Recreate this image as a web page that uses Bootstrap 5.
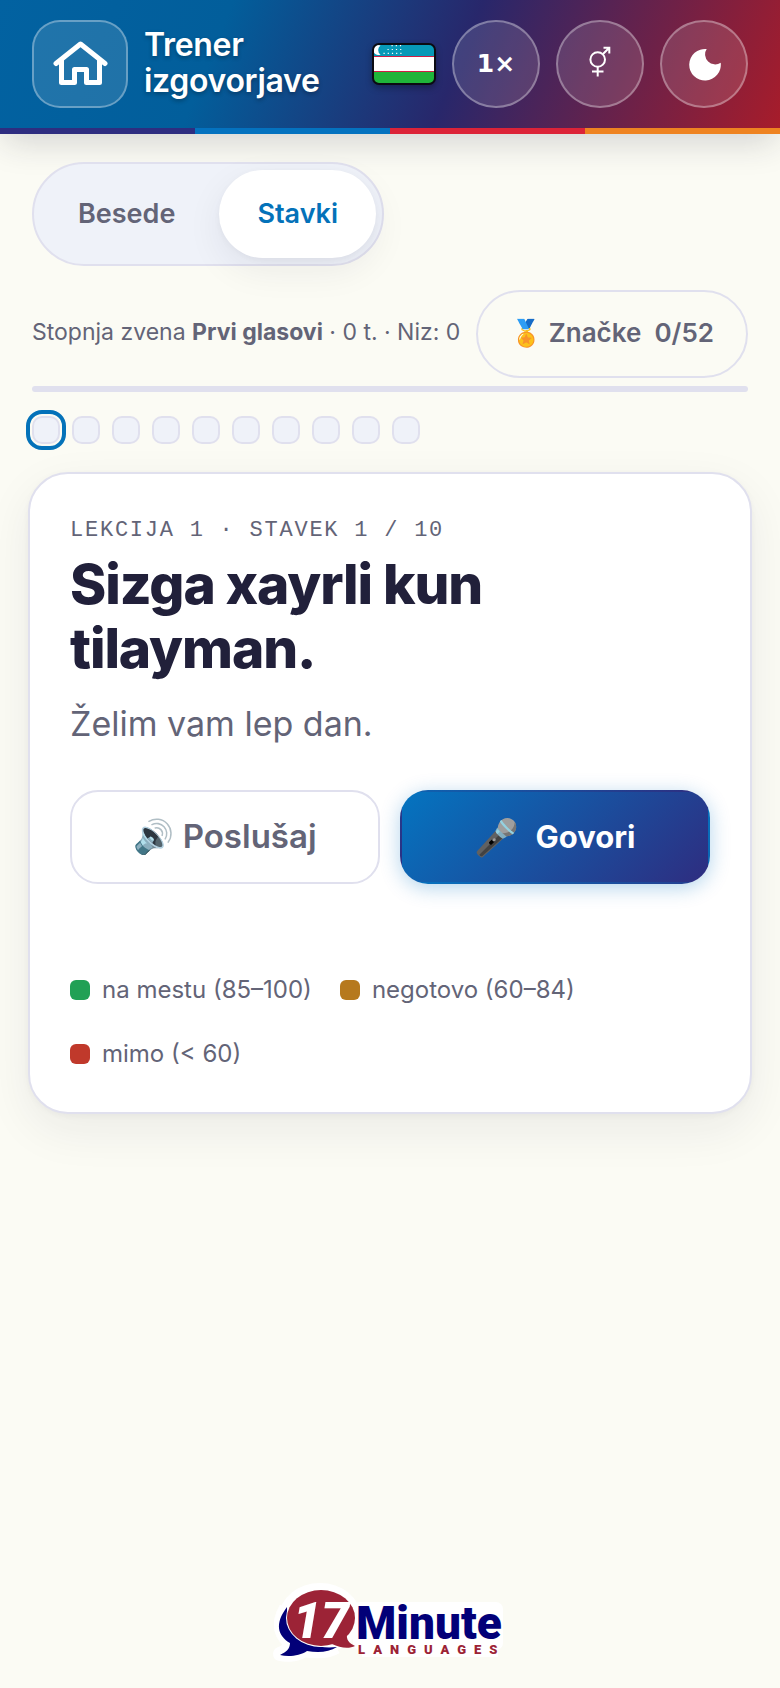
<!DOCTYPE html>
<html lang="sl">
<head>
<meta charset="utf-8">
<meta name="viewport" content="width=device-width, initial-scale=1">
<title>Trener izgovorjave</title>
<link rel="stylesheet" href="https://cdn.jsdelivr.net/npm/bootstrap@5.3.0/dist/css/bootstrap.min.css">
<style>
  :root {
    --ink: #21203a;
    --muted: #636477;
    --line: #e0e0ee;
    --soft: #eff2f9;
    --blue: #0472b9;
    --indigo: #2e2d80;
    --page: #fbfbf4;
  }
  body {
    font-family: Inter, "Noto Sans", sans-serif;
    background: var(--page);
    color: var(--muted);
  }
  .topbar {
    background: linear-gradient(112deg, #0262a1 0%, #025e9b 28%, #28276b 58%, #a81c2a 100%);
    box-shadow: 0 12px 32px -4px rgba(33, 32, 58, .18);
  }
  .topbar-row { padding: 20px 32px; }
  .stripe { height: 6px; }
  .stripe span { flex: 1; }
  .c-indigo { background: var(--indigo); }
  .c-blue { background: #0472bf; }
  .c-red { background: #dc2338; }
  .c-orange { background: #ee8321; }
  .home-btn, .round-btn {
    height: 88px;
    color: #fff;
    background: rgba(255, 255, 255, .12);
    border: 2px solid rgba(255, 255, 255, .32);
  }
  .home-btn { width: 96px; border-radius: 28px; }
  .round-btn { width: 88px; border-radius: 50%; }
  .speed { font: 700 25px/36px "DejaVu Sans", sans-serif; }
  .app-title {
    padding-bottom: 2px;
    font-size: 32px;
    line-height: 36px;
    font-weight: 600;
    letter-spacing: -.01em;
    color: #fff;
    text-shadow: 0 2px 4px rgba(0, 0, 0, .3);
  }
  .flag { filter: drop-shadow(0 3px 3px rgba(0, 0, 0, .3)); }
  .page-main { padding: 28px 32px; }
  .mode-switch {
    padding: 6px;
    gap: 6px;
    background: var(--soft);
    border: 2px solid var(--line);
  }
  .mode-switch button {
    height: 88px;
    padding: 0 38px;
    border: 0;
    font-size: 27px;
    font-weight: 600;
    color: var(--muted);
    background: transparent;
  }
  .mode-switch button.active {
    color: var(--blue);
    background: #fff;
    box-shadow: 0 12px 36px rgba(33, 32, 58, .07), 0 2px 6px rgba(33, 32, 58, .04);
  }
  .stats { margin-top: 24px; font-size: 23px; }
  .stats-text { padding-bottom: 4px; }
  .badges-btn {
    height: 88px;
    padding: 0 32px 4px;
    border: 2px solid var(--line);
    font-size: 26px;
    font-weight: 600;
    color: var(--muted);
    background: transparent;
  }
  .meter { height: 6px; margin-top: 8px; background: var(--line); }
  .steps { gap: 12px; margin-top: 24px; }
  .steps button {
    width: 28px;
    height: 28px;
    padding: 0;
    border: 2px solid var(--line);
    border-radius: 10px;
    background: var(--soft);
  }
  .steps button.current { outline: 4px solid var(--blue); outline-offset: 2px; }
  .lesson {
    margin: 28px -4px 0;
    padding: 40px;
    background: #fff;
    border: 2px solid var(--line);
    border-radius: 40px;
    box-shadow: 0 16px 48px rgba(33, 32, 58, .07), 0 2px 6px rgba(33, 32, 58, .04);
  }
  .lesson-meta {
    font: 22px/34px "Liberation Mono", monospace;
    letter-spacing: .08em;
    margin-bottom: 4px;
  }
  .phrase {
    font-size: 55px;
    line-height: 64px;
    font-weight: 800;
    letter-spacing: -.02em;
    color: var(--ink);
  }
  .translation { font-size: 34px; line-height: 48px; margin-top: 20px; }
  .actions { gap: 20px; margin-top: 42px; }
  .actions button {
    flex: 1;
    height: 94px;
    border: 2px solid var(--line);
    border-radius: 28px;
    background: #fff;
    color: var(--muted);
    font-size: 33px;
    font-weight: 600;
  }
  .actions button.speak {
    border-color: transparent;
    background: linear-gradient(135deg, #0474c0, #2e2d80);
    color: #fff;
    font-size: 31px;
    font-weight: 700;
    box-shadow: 0 4px 20px rgba(4, 114, 191, .3);
  }
  .actions .emoji { font-size: 36px; }
  .legend-list { gap: 28px; margin-top: 88px; font-size: 24px; line-height: 36px; }
  .swatch { width: 20px; height: 20px; border-radius: 6px; }
  .c-good { background: #21a055; }
  .c-unsure { background: #b6791d; }
  .c-off { background: #c0392b; }
  .site-logo { padding-bottom: 20px; }
</style>
<script src="https://cdn.jsdelivr.net/npm/bootstrap@5.3.0/dist/js/bootstrap.bundle.min.js"></script>
</head>
<body class="d-flex flex-column min-vh-100">

<header class="topbar">
  <div class="topbar-row d-flex align-items-center gap-3">
    <button type="button" class="home-btn d-flex align-items-center justify-content-center flex-shrink-0" aria-label="Domov">
      <svg width="56" height="48" viewBox="0 0 56 48" fill="none" stroke="#fff" stroke-width="5" stroke-linecap="round" stroke-linejoin="round">
        <path d="M4 23.500 28.500 4l24.500 19.500M9.500 21v21.500h13V29.500h12v13h13V21"/>
      </svg>
    </button>
    <h1 class="app-title flex-grow-1 mb-0">Trener izgovorjave</h1>
    <svg class="flag flex-shrink-0" width="64" height="42" viewBox="0 0 64 42" role="img" aria-label="Uzbekistan">
      <defs><clipPath id="flagShape"><rect x="1" y="1" width="62" height="40" rx="6"/></clipPath></defs>
      <g clip-path="url(#flagShape)">
        <rect width="64" height="42" fill="#fff"/>
        <rect width="64" height="13" fill="#0799b8"/>
        <rect y="13" width="64" height="1" fill="#ce1f45"/>
        <rect y="28" width="64" height="1" fill="#ce1f45"/>
        <rect y="29" width="64" height="13" fill="#1fb53a"/>
        <path d="M8.500 2.500a5 5 0 1 0 0 9 5.500 5.500 0 0 1 0-9z" fill="#fff"/>
        <path d="M11.500 10.300h19M15.500 6.500h15M19.500 2.700h11" stroke="#fff" stroke-width="1.200" stroke-dasharray="1.200 3"/>
      </g>
      <rect x="1" y="1" width="62" height="40" rx="6" fill="none" stroke="#0b0b12" stroke-width="2"/>
    </svg>
    <button type="button" class="round-btn speed flex-shrink-0">1×</button>
    <button type="button" class="round-btn d-flex align-items-center justify-content-center flex-shrink-0" aria-label="Glas">
      <svg width="24" height="36" viewBox="0 0 24 36" fill="none" stroke="#fff" stroke-width="2">
        <circle cx="9.700" cy="13.500" r="7.300"/>
        <path d="M15 8 21 2M15.500 1.700H21.300V7.500M9.700 21v9.500M4 25.500h11.500"/>
      </svg>
    </button>
    <button type="button" class="round-btn d-flex align-items-center justify-content-center flex-shrink-0" aria-label="Temni način">
      <svg width="36" height="36" viewBox="0 0 36 36"><path d="M20.700 3A10 10 0 0 0 34.700 16.700 15.800 15.800 0 1 1 20.700 3z" fill="#fff"/></svg>
    </button>
  </div>
  <div class="stripe d-flex"><span class="c-indigo"></span><span class="c-blue"></span><span class="c-red"></span><span class="c-orange"></span></div>
</header>

<main class="page-main flex-grow-1">
  <div class="mode-switch d-inline-flex rounded-pill align-top">
    <button type="button" class="rounded-pill">Besede</button>
    <button type="button" class="rounded-pill active" aria-pressed="true">Stavki</button>
  </div>

  <div class="stats d-flex align-items-center justify-content-between">
    <div class="stats-text">Stopnja zvena <b>Prvi glasovi</b> · 0 t. · Niz: 0</div>
    <button type="button" class="badges-btn rounded-pill text-nowrap">🏅 Značke&nbsp; 0/52</button>
  </div>

  <div class="meter rounded-pill" role="progressbar" aria-label="Napredek" aria-valuenow="0" aria-valuemin="0" aria-valuemax="100"></div>

  <div class="steps d-flex flex-wrap">
    <button type="button" class="current" aria-label="Stavek 1"></button>
    <button type="button" aria-label="Stavek 2"></button>
    <button type="button" aria-label="Stavek 3"></button>
    <button type="button" aria-label="Stavek 4"></button>
    <button type="button" aria-label="Stavek 5"></button>
    <button type="button" aria-label="Stavek 6"></button>
    <button type="button" aria-label="Stavek 7"></button>
    <button type="button" aria-label="Stavek 8"></button>
    <button type="button" aria-label="Stavek 9"></button>
    <button type="button" aria-label="Stavek 10"></button>
  </div>

  <section class="lesson">
    <div class="lesson-meta text-uppercase">Lekcija 1 · Stavek 1 / 10</div>
    <h2 class="phrase mb-0">Sizga xayrli kun tilayman.</h2>
    <p class="translation mb-0">Želim vam lep dan.</p>
    <div class="actions d-flex">
      <button type="button">🔊 Poslušaj</button>
      <button type="button" class="speak d-flex align-items-center justify-content-center gap-3"><span class="emoji">🎤</span>Govori</button>
    </div>
    <div class="legend-list d-flex flex-wrap">
      <span class="d-flex align-items-center gap-2"><i class="swatch c-good me-1"></i>na mestu (85–100)</span>
      <span class="d-flex align-items-center gap-2"><i class="swatch c-unsure me-1"></i>negotovo (60–84)</span>
      <span class="d-flex align-items-center gap-2"><i class="swatch c-off me-1"></i>mimo (&lt; 60)</span>
    </div>
  </section>
</main>

<footer class="site-logo d-flex justify-content-center">
  <svg width="240" height="88" viewBox="0 0 240 88" role="img" aria-label="17 Minute Languages">
    <g stroke="#fff" stroke-width="14" stroke-linejoin="round" fill="#fff">
      <ellipse cx="50" cy="38" rx="34" ry="28"/>
      <path d="M16 28C6 45 12 56 20 62c0 6-4 10-10 12 8 2 20 0 24-4 12 2 24 2 32-3M90 29h136v34H90zM92 70h136"/>
    </g>
    <path d="M17 27C4 44 8 56 20 63c0 6-4 9-10 12 8 2 20 1 27-4 12 2 22 1 30-4C40 70 16 58 17 27z" fill="#020078"/>
    <ellipse cx="51" cy="38" rx="35" ry="29" fill="#fff"/>
    <ellipse cx="51" cy="38" rx="34" ry="28" fill="#9c2336"/>
    <path d="M62 64c8 4 17 5 23 2-6-3-9-6-8-13z" fill="#9c2336"/>
    <text x="23" y="58" font-family="Roboto, sans-serif" font-size="50" font-weight="900" font-style="italic" fill="#fff">17</text>
    <text x="86" y="59" font-family="Roboto, sans-serif" font-size="46" font-weight="900" fill="#020078">Minute</text>
    <text x="88" y="74" font-family="Roboto, sans-serif" font-size="13" font-weight="900" letter-spacing="8" fill="#9c2336">LANGUAGES</text>
  </svg>
</footer>

</body>
</html>
